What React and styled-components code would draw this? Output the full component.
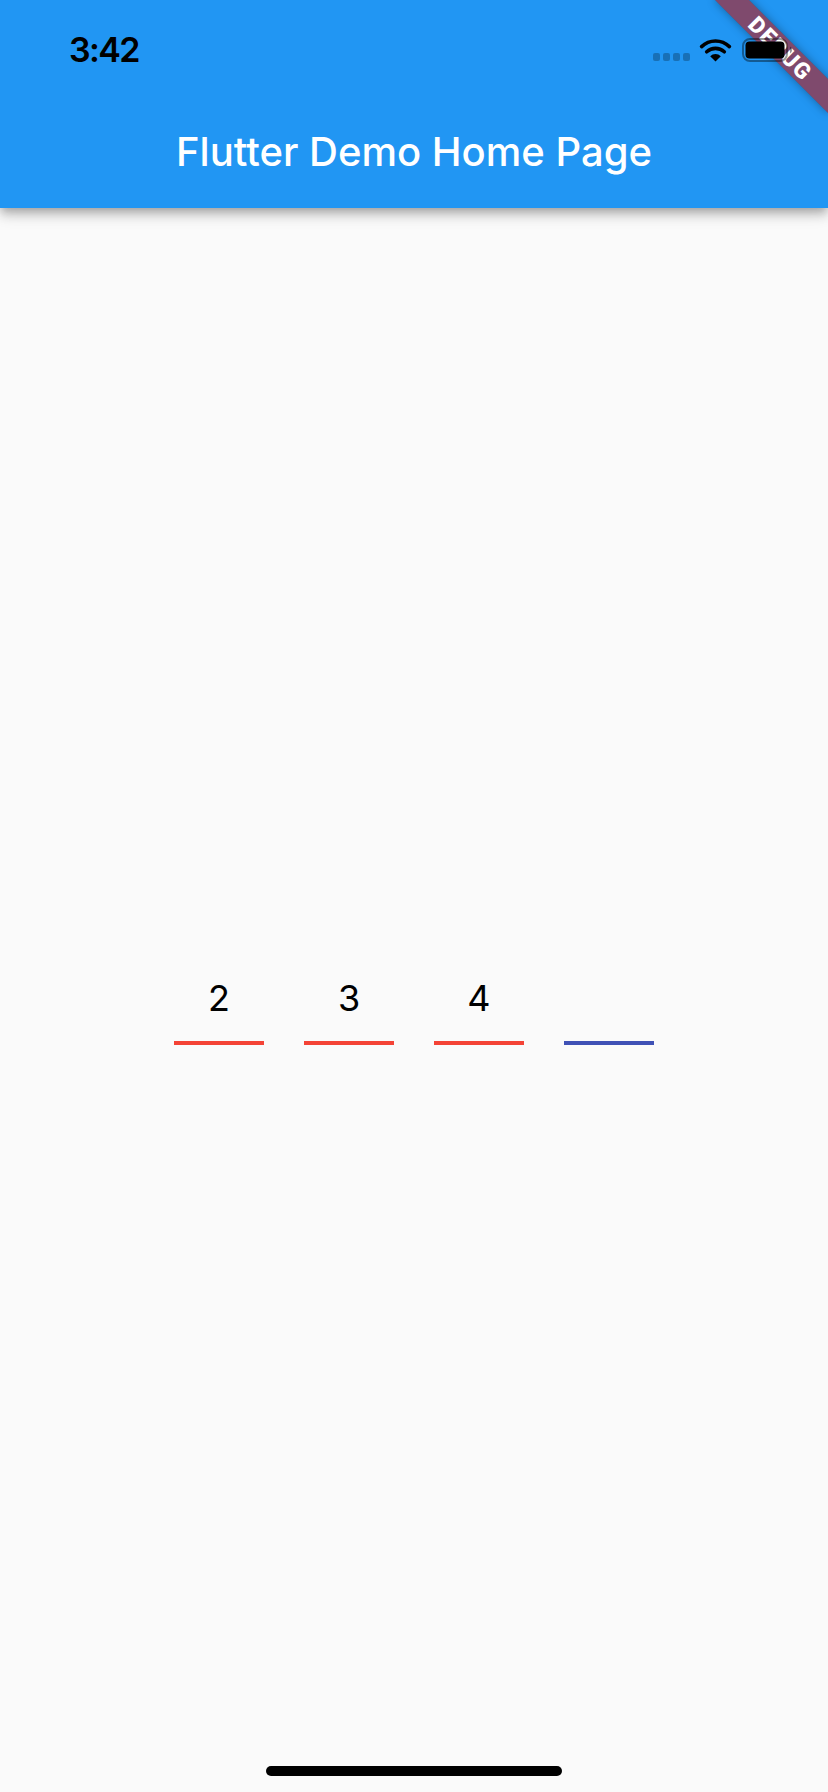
import React from "react";
import styled, { createGlobalStyle } from "styled-components";

const GlobalStyle = createGlobalStyle`
  html, body {
    margin: 0;
    padding: 0;
    background: #fafafa;
  }
  body {
    font-family: Inter, "Noto Sans", sans-serif;
    overflow: hidden;
  }
  * { box-sizing: border-box; }
`;

const Screen = styled.div`
  position: relative;
  width: 828px;
  height: 1792px;
  overflow: hidden;
  background: #fafafa;
  display: flex;
  flex-direction: column;
`;

const Header = styled.header`
  position: relative;
  height: 208px;
  flex: none;
  background: #2196f3;
  display: flex;
  flex-direction: column;
  box-shadow: 0 4px 8px -2px rgba(0, 0, 0, 0.2), 0 8px 10px 0 rgba(0, 0, 0, 0.14),
    0 2px 20px 0 rgba(0, 0, 0, 0.12);
`;

const StatusBar = styled.div`
  height: 96px;
  display: flex;
  align-items: flex-start;
  padding: 33px 34px 0 69px;
`;

const Clock = styled.span`
  font-family: Inter, sans-serif;
  font-size: 34px;
  line-height: 34px;
  font-weight: 600;
  color: #000;
  letter-spacing: -1.6px;
`;

const StatusIcons = styled.div`
  position: relative;
  z-index: 10;
  margin-left: auto;
  height: 34px;
  display: flex;
  align-items: center;
`;

const SignalDots = styled.div`
  display: flex;
  gap: 3px;
  align-self: flex-end;
  margin-bottom: 6px;
  margin-right: 9px;
`;

const Dot = styled.span`
  width: 7px;
  height: 8px;
  border-radius: 2px;
  background: rgba(0, 0, 0, 0.25);
`;

const Toolbar = styled.div`
  height: 112px;
  display: flex;
  align-items: center;
  justify-content: center;
`;

const Title = styled.h1`
  margin: 0;
  font-family: Inter, sans-serif;
  font-size: 40px;
  line-height: 40px;
  font-weight: 500;
  color: #fff;
`;

const Body = styled.main`
  flex: 1;
  display: flex;
  align-items: center;
  justify-content: center;
`;

const CodeRow = styled.div`
  display: flex;
  gap: 40px;
`;

const CodeField = styled.div`
  width: 90px;
  height: 90px;
  border-bottom: 4px solid ${(p) => (p.$active ? "#3f51b5" : "#f44336")};
  display: flex;
  align-items: center;
  justify-content: center;
  font-family: Inter, sans-serif;
  font-size: 36px;
  line-height: 36px;
  font-weight: 400;
  color: #000;
`;

const HomeIndicator = styled.div`
  position: absolute;
  left: 50%;
  bottom: 16px;
  width: 296px;
  height: 10px;
  margin-left: -148px;
  border-radius: 5px;
  background: #000;
`;

const DebugBanner = styled.div`
  position: absolute;
  z-index: 5;
  left: 700px;
  top: 36px;
  width: 160px;
  height: 24px;
  transform: rotate(45deg);
  background: rgba(183, 28, 28, 0.627);
  box-shadow: 0 0 10px rgba(0, 0, 0, 0.35);
  display: flex;
  align-items: center;
  justify-content: center;
  font-family: Roboto, Inter, sans-serif;
  font-weight: 900;
  font-size: 22.5px;
  line-height: 22px;
  color: #fff;
  letter-spacing: 1.5px;
  padding-left: 1.5px;
`;

const Wifi = () => (
  <svg width="33" height="24" viewBox="0 0 33 24" style={{ marginRight: 10 }}>
    <path
      d="M2.6 8.6 A20 20 0 0 1 30.4 8.6"
      fill="none"
      stroke="#000"
      strokeWidth="3.6"
      strokeLinecap="round"
    />
    <path
      d="M7.7 13.8 A13 13 0 0 1 25.3 13.8"
      fill="none"
      stroke="#000"
      strokeWidth="3.6"
      strokeLinecap="round"
    />
    <path d="M11.2 18.3 A7.5 7.5 0 0 1 21.8 18.3 L16.5 23.6 Z" fill="#000" />
  </svg>
);

const Battery = () => (
  <svg width="52" height="24" viewBox="0 0 52 24">
    <rect
      x="1"
      y="1"
      width="44"
      height="22"
      rx="7"
      fill="none"
      stroke="rgba(0,0,0,0.4)"
      strokeWidth="2"
    />
    <rect x="3.5" y="3.5" width="39" height="17" rx="4" fill="#000" />
    <path d="M48 8.5 A4 4 0 0 1 48 15.5 Z" fill="rgba(0,0,0,0.4)" />
  </svg>
);

const digits = ["2", "3", "4", ""];

export default function App() {
  return (
    <>
      <GlobalStyle />
      <Screen>
        <Header>
          <StatusBar>
            <Clock>3:42</Clock>
            <StatusIcons>
              <SignalDots>
                <Dot />
                <Dot />
                <Dot />
                <Dot />
              </SignalDots>
              <Wifi />
              <Battery />
            </StatusIcons>
          </StatusBar>
          <Toolbar>
            <Title>Flutter Demo Home Page</Title>
          </Toolbar>
        </Header>
        <Body>
          <CodeRow>
            {digits.map((d, i) => (
              <CodeField key={i} $active={d === ""}>
                {d}
              </CodeField>
            ))}
          </CodeRow>
        </Body>
        <HomeIndicator />
        <DebugBanner>DEBUG</DebugBanner>
      </Screen>
    </>
  );
}
